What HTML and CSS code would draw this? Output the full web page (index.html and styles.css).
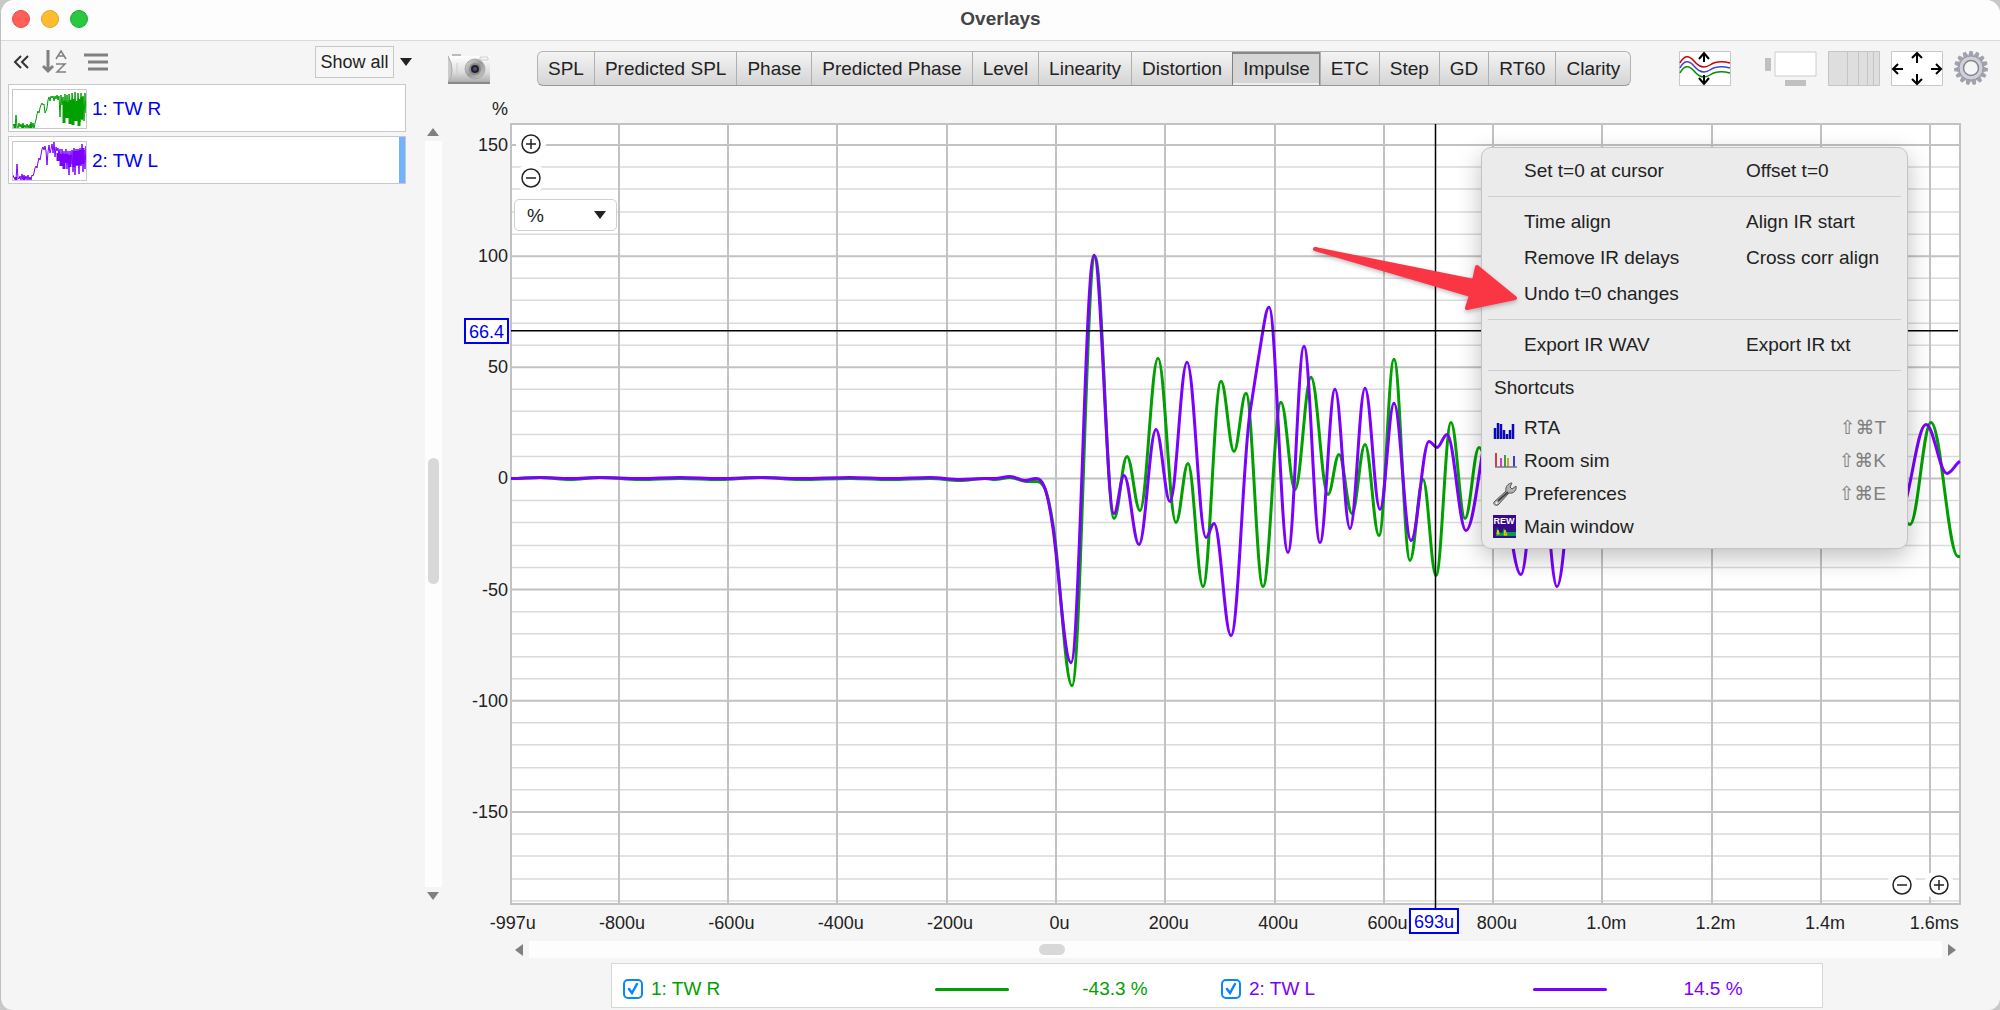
FILE: index.html
```html
<!DOCTYPE html>
<html lang="en">
<head>
  <meta charset="UTF-8">
  <meta name="viewport" content="width=device-width, initial-scale=1.0">
  <title>Overlays</title>
  <link rel="stylesheet" href="styles.css">
</head>
<body>
  <div class="window">
    <header class="titlebar">
      <div class="lights">
        <button class="light red" aria-label="Close"></button>
        <button class="light yellow" aria-label="Minimize"></button>
        <button class="light green" aria-label="Zoom"></button>
      </div>
      <h1>Overlays</h1>
    </header>

    <div class="main">
      <aside class="sidebar">
        <div class="sidebar-tools">
          <button class="icon-btn" aria-label="Collapse">
            <svg width="18" height="18" viewBox="0 0 18 18" fill="none" stroke="#333" stroke-width="2">
              <path d="M8 3L2 9l6 6M15 3L9 9l6 6"/>
            </svg>
          </button>
          <button class="icon-btn sort-btn" aria-label="Sort">
            <svg width="26" height="26" viewBox="0 0 26 26" fill="none" stroke="#808080">
              <path d="M6 1v21M1 17l5 5 5-5" stroke-width="3"/>
              <path d="M14 10l5-8 5 8M16 7h6M14 15h9l-8 8h9" stroke-width="1.5"/>
            </svg>
          </button>
          <button class="icon-btn lines-btn" aria-label="Options">
            <svg width="26" height="20" viewBox="0 0 26 20" stroke="#808080" stroke-width="3">
              <path d="M1 3h24M5 10h20M5 17h20"/>
            </svg>
          </button>
          <label class="show-filter">
            <select aria-label="Show">
              <option>Show all</option>
            </select>
            <svg width="12" height="8" viewBox="0 0 12 8"><path d="M0 0h12L6 8z" fill="#222"/></svg>
          </label>
        </div>
        <ul class="measurements">
          <li>
            <svg class="thumb" viewBox="0 0 73 38" fill="none" stroke="#00a000">
              <path d="M0 36l1-2 1 4 1-13 1 11 1 2 1-5 1 4 1-3 1 4 1-5 1 4 1-2 1 3 1-4 1 4 1-3 1 4 1-7 1 5 1-4 1 6 1-6 1-3 1-6 1-3 1 2 1-5 1-3 1-2 1 2 1-1 1 9 1-2 1-3 1-8 1-3 1 4 1-5 1 2 1-2 1 5 1-5 1 3 1-4 1 5 1-4 1 21 1-22 1 10 1-8 1 17 1-20 1 18 1-17 1 23 1-24 1 8 1 17 1-26 1 8 1 16 1-25 1 20 1 3 1-22 1 12 1 17 1-29 1 27 1-24 1 25 1-28 1 20 1-18 1 17 1-19 1 16 1-21 1 19 1-23 1 17 1-21 1 31"/>
              <path d="M2 34v4M10 35v3M18 34v4M51 11v22M54 12v16M57 10v24M60 9v26M63 11v20M66 9v27M69 7v22" stroke-width="3"/>
            </svg>
            1: TW R
          </li>
          <li class="selected">
            <svg class="thumb" viewBox="0 0 73 38" fill="none" stroke="#7a00ff">
              <path d="M0 33l1 3 1 1 1 1 1-16 1 14 1 1 1-3 1 4 1-6 1 5 1-4 1 4 1-3 1 4 1-5 1 5 1-3 1 3 1-5 1 1 1-3 1-5 1-2 1 2 1-6 1-4 1 2 1-5 1-6 1-2 1 3 1-4 1 5 1 14 1-13 1-7 1 8 1-4 1-5 1 9 1-11 1 15 1-10 1 4 1-3 1 8 1-7 1 17 1-17 1 11 1-9 1 12 1-14 1 20 1-18 1 24 1-24 1 13 1-14 1 22 1-24 1 27 1-26 1 17 1-17 1 25 1-26 1 18 1-22 1 28 1-22 1 19 1-23 1 28 1-34 1 36"/>
              <path d="M3 35v3M11 35v3M45 11v8M48 12v12M51 12v15M54 12v9M57 13v12M61 9v16M64 9v14M67 8v15M70 6v16" stroke-width="3"/>
            </svg>
            2: TW L
          </li>
        </ul>
      </aside>

      <div class="vscroll">
        <svg width="12" height="8" viewBox="0 0 12 8"><path d="M6 0l6 8H0z" fill="#808080"/></svg>
        <div class="vtrack"><div class="vthumb"></div></div>
        <svg width="12" height="8" viewBox="0 0 12 8"><path d="M0 0h12L6 8z" fill="#808080"/></svg>
      </div>

      <section class="graph">
        <div class="toolbar">
          <button class="icon-btn" aria-label="Capture">
            <svg width="43" height="34" viewBox="0 0 43 34">
              <defs>
                <linearGradient id="body" x1="0" y1="0" x2="0" y2="1">
                  <stop offset="0" stop-color="#fff"/><stop offset=".6" stop-color="#ddd"/><stop offset="1" stop-color="#aaa"/>
                </linearGradient>
                <linearGradient id="ring" x1="0" y1="0" x2="1" y2="1">
                  <stop offset="0" stop-color="#ddd"/><stop offset=".5" stop-color="#999"/><stop offset="1" stop-color="#ccc"/>
                </linearGradient>
              </defs>
              <path d="M4 3h9v2H4z" fill="#bbb"/>
              <path d="M0 5h42v27H0q6-13 0-27z" fill="url(#body)"/>
              <path d="M0 5q8 14 0 27" fill="#ccc" stroke="#aaa"/>
              <path d="M0 32h42" stroke="#888" stroke-width="2"/>
              <path d="M9 12v13" stroke="#ccc"/>
              <path d="M32 6h8v3h-8z" fill="#f5f5f5" stroke="#ccc"/>
              <circle cx="27" cy="18" r="10" fill="url(#ring)" stroke="#aaa"/>
              <circle cx="27" cy="18" r="6" fill="#888"/>
              <circle cx="27" cy="18" r="4" fill="#222"/>
              <circle cx="27" cy="18" r="2" fill="#4a4a90"/>
            </svg>
          </button>
          <nav class="tabs">
            <button>SPL</button>
            <button>Predicted SPL</button>
            <button>Phase</button>
            <button>Predicted Phase</button>
            <button>Level</button>
            <button>Linearity</button>
            <button>Distortion</button>
            <button class="active">Impulse</button>
            <button>ETC</button>
            <button>Step</button>
            <button>GD</button>
            <button>RT60</button>
            <button>Clarity</button>
          </nav>
          <div class="view-tools">
            <button class="icon-btn traces-btn" aria-label="Separate traces">
              <svg width="52" height="35" viewBox="0 0 52 35" fill="none">
                <path d="M.5.5h51v34H.5z" fill="#fff" stroke="#c8c8c8"/>
                <path d="M1 12C5 4 10 4 15 10s10 8 16 4 12-4 20-2" stroke="#d00000" stroke-width="1.5"/>
                <path d="M1 17C5 9 10 9 15 15s10 8 16 4 12-4 20-2" stroke="#4040e0" stroke-width="1.5"/>
                <path d="M1 22C5 14 10 14 15 20s10 8 16 4 12-4 20-2" stroke="#009000" stroke-width="1.5"/>
                <path d="M25 11V2M20 8l5-6 5 6M25 24v9M20 27l5 6 5-6" stroke="#000" stroke-width="2"/>
              </svg>
            </button>
            <button class="icon-btn" aria-label="Scrollbars">
              <svg width="52" height="35" viewBox="0 0 52 35">
                <path d="M10 1h41v24H10z" fill="#fff" stroke="#ccc"/>
                <path d="M0 7h6v13H0zM20 29h21v6H20z" fill="#c0c0c0"/>
              </svg>
            </button>
            <button class="icon-btn" aria-label="Frequency axis">
              <svg width="52" height="35" viewBox="0 0 52 35" stroke="#c4c4c4">
                <path d="M.5.5h51v34H.5z" fill="#dedede"/>
                <path d="M19.500 1v33M30.500 1v33M39.500 1v33M45.500 1v33"/>
              </svg>
            </button>
            <button class="icon-btn" aria-label="Graph limits">
              <svg width="52" height="35" viewBox="0 0 52 35" fill="none">
                <path d="M.5.5h51v34H.5z" fill="#fff" stroke="#c8c8c8"/>
                <path d="M26 12V2M21 7l5-5 5 5M26 23v10M21 28l5 5 5-5M12 18H2M7 13l-5 5 5 5M40 18h10M45 13l5 5-5 5" stroke="#000" stroke-width="2"/>
              </svg>
            </button>
            <button class="icon-btn" aria-label="Graph controls">
              <svg width="34" height="35" viewBox="-17 -17 34 35">
                <g id="gear-teeth" fill="#a2a2ae"></g>
                <circle r="12" fill="#d0d0da" stroke="#9a9aa6"/>
                <circle r="7.500" fill="#f5f5f5" stroke="#85858f" stroke-width="1.500"/>
              </svg>
            </button>
          </div>
        </div>
        <div class="unit">%</div>

        <div class="plot-row">
          <div class="y-axis">
            <span>150</span><span>100</span><span>50</span><span>0</span><span>-50</span><span>-100</span><span>-150</span>
          </div>
          <div class="plot">
            <svg class="traces" viewBox="511 124 1449 779" preserveAspectRatio="none" fill="none">
              <g id="minor" stroke="#dadada" stroke-width="1.500"></g>
              <g id="major" stroke="#c2c2c2" stroke-width="2"></g>
              <path id="trace-r" stroke="#00a000" stroke-width="3"/>
              <path id="trace-l" stroke="#7a00ff" stroke-width="3"/>
              <path d="M511 330.500H1958M1435.500 124V908" stroke="#000" stroke-width="1.500"/>
            </svg>

            <div class="zoom-y">
              <button class="zoom-btn" aria-label="Zoom in vertically"><svg width="20" height="20" viewBox="0 0 20 20"><path d="M10 5v10M5 10h10"/><circle cx="10" cy="10" r="9"/></svg></button>
              <button class="zoom-btn" aria-label="Zoom out vertically"><svg width="20" height="20" viewBox="0 0 20 20"><path d="M5 10h10"/><circle cx="10" cy="10" r="9"/></svg></button>
            </div>
            <select class="unit-select" aria-label="Y axis unit">
              <option>%</option>
            </select>
            <div class="zoom-x">
              <button class="zoom-btn" aria-label="Zoom out horizontally"><svg width="20" height="20" viewBox="0 0 20 20"><path d="M5 10h10"/><circle cx="10" cy="10" r="9"/></svg></button>
              <button class="zoom-btn" aria-label="Zoom in horizontally"><svg width="20" height="20" viewBox="0 0 20 20"><path d="M10 5v10M5 10h10"/><circle cx="10" cy="10" r="9"/></svg></button>
            </div>

            <span class="cursor-label cursor-y">66.4</span>
            <span class="cursor-label cursor-x">693u</span>

            <div class="menu">
              <div class="menu-pair"><button>Set t=0 at cursor</button><button>Offset t=0</button></div>
              <hr>
              <div class="menu-pair"><button>Time align</button><button>Align IR start</button></div>
              <div class="menu-pair"><button>Remove IR delays</button><button>Cross corr align</button></div>
              <div class="menu-pair"><button>Undo t=0 changes</button></div>
              <hr>
              <div class="menu-pair"><button>Export IR WAV</button><button>Export IR txt</button></div>
              <hr>
              <h2>Shortcuts</h2>
              <button class="shortcut">
                <svg width="24" height="24" viewBox="0 0 24 24" stroke="#0a0ab4" stroke-width="2.500"><path d="M2 23V12M5 23V7M8 23V8M11 23v-9M14 23v-5M17 23v-9M20 23V8"/></svg>
                RTA <kbd>⇧⌘T</kbd>
              </button>
              <button class="shortcut">
                <svg width="24" height="24" viewBox="0 0 24 24" stroke-width="1.500"><path d="M3 18V4" stroke="#d00000"/><path d="M8 18V9" stroke="#d000d0"/><path d="M12 18V6" stroke="#008800"/><path d="M15 18V9" stroke="#c09000"/><path d="M21 18V7" stroke="#0000d0"/><path d="M2 18h22" stroke="#777"/></svg>
                Room sim <kbd>⇧⌘K</kbd>
              </button>
              <button class="shortcut">
                <svg width="24" height="24" viewBox="0 0 24 24"><path d="M1 20L13 9C12 5 15 1 19 1l-2 4 2 2 4-3c1 5-3 8-7 7L5 23c-3 1-5-1-4-3z" fill="#b0b0b0" stroke="#555"/><path d="M5 19l10-9" stroke="#444" stroke-width="2"/><circle cx="3.500" cy="21" r="1" fill="#fff"/></svg>
                Preferences <kbd>⇧⌘E</kbd>
              </button>
              <button class="shortcut">
                <svg width="24" height="24" viewBox="0 0 24 24"><path d="M0 0h23v23H0z" fill="#3a0a8c"/><path d="M3 20l1-8 2 5 3 1 2-5 2 4 10 0v4H3z" fill="#00a040"/><path d="M4 19l1-4 1 4zM11 20l1-5 2 5z" fill="#ff5020" stroke="#e0e000"/><text class="rew" x="11" y="9" text-anchor="middle">REW</text></svg>
                Main window
              </button>
            </div>

            <svg class="pointer" width="210" height="70" viewBox="1310 244 210 70">
              <path d="M1315 249L1474 281l3-14 38 31-48 10 4-13z" fill="#fa3544" stroke="#fa3544" stroke-width="4" stroke-linejoin="round"/>
            </svg>
          </div>
        </div>

        <div class="x-axis">
          <span>-997u</span><span>-800u</span><span>-600u</span><span>-400u</span><span>-200u</span><span>0u</span><span>200u</span><span>400u</span><span>600u</span><span>800u</span><span>1.0m</span><span>1.2m</span><span>1.4m</span><span>1.6ms</span>
        </div>

        <div class="hscroll">
          <svg width="8" height="12" viewBox="0 0 8 12"><path d="M8 0v12L0 6z" fill="#808080"/></svg>
          <div class="htrack"><div class="hthumb"></div></div>
          <svg width="8" height="12" viewBox="0 0 8 12"><path d="M0 0v12l8-6z" fill="#808080"/></svg>
        </div>

        <div class="legend">
          <div class="legend-item trace-right">
            <input type="checkbox" id="show-r" checked>
            <label for="show-r">1: TW R</label>
            <i></i>
            <output>-43.3 %</output>
          </div>
          <div class="legend-item trace-left">
            <input type="checkbox" id="show-l" checked>
            <label for="show-l">2: TW L</label>
            <i></i>
            <output>14.5 %</output>
          </div>
        </div>
      </section>
    </div>
  </div>

  <script src="script.js"></script>
</body>
</html>
```
FILE: styles.css
```css
:root {
  --bg: #f5f5f5;
  --border: #c8c8c8;
  --text: #222;
  --blue: #0000f0;
  --trace-r: #00a000;
  --trace-l: #7a00ff;
  --track: #fdfdfd;
  --thumb: #d8d8d8;
}

* {
  margin: 0;
  padding: 0;
  box-sizing: border-box;
  font-family: "Liberation Sans", Arial, Helvetica, sans-serif;
}

body {
  color: var(--text);
  background-color: #c8c8c8;
  font-size: 18px;
  line-height: 20px;
  overflow: hidden;
}

button {
  border: none;
  background: none;
  color: inherit;
  font-size: 19px;
  line-height: 20px;
}

svg {
  display: block;
}

.window {
  display: flex;
  flex-direction: column;
  height: 100vh;
  background-color: var(--bg);
  border-left: 1px solid #c0c0c0;
  border-radius: 14px 14px 12px 12px;
  overflow: hidden;
}

.titlebar {
  display: grid;
  grid-template-columns: 1fr auto 1fr;
  align-items: center;
  height: 41px;
  padding: 0 11px 2px;
  background-color: #fdfdfd;
  border-bottom: 1px solid #dadada;
}

.titlebar h1 {
  font-size: 19px;
  font-weight: bold;
  color: #444;
}

.lights {
  display: flex;
  gap: 11px;
}

.light {
  width: 18px;
  height: 18px;
  border-radius: 50%;
}

.red {
  background-color: #ff5f57;
  border: 1px solid #e24b41;
}

.yellow {
  background-color: #febc2e;
  border: 1px solid #e1a325;
}

.green {
  background-color: #28c840;
  border: 1px solid #1dac2c;
}

.main {
  display: flex;
  flex: 1;
  min-height: 0;
}

/* Measurement list */
.sidebar {
  width: 412px;
  padding-left: 7px;
}

.sidebar-tools {
  display: flex;
  align-items: center;
  height: 43px;
  padding: 0 0 2px 5px;
}

.sort-btn {
  margin-left: 11px;
}

.lines-btn {
  margin-left: 15px;
}

.show-filter {
  display: flex;
  align-items: center;
  gap: 6px;
  margin-left: auto;
  padding-right: 1px;
}

.show-filter select {
  appearance: none;
  width: 79px;
  height: 32px;
  border: 1px solid var(--border);
  background-color: #f7f7f7;
  color: var(--text);
  font-size: 18px;
  text-align: center;
}

.measurements {
  display: flex;
  flex-direction: column;
  gap: 4px;
  width: 398px;
  list-style: none;
}

.measurements li {
  display: flex;
  align-items: center;
  gap: 5px;
  height: 48px;
  padding: 1px 0 0 3px;
  border: 1px solid var(--border);
  background-color: #fff;
  color: var(--blue);
  font-size: 19px;
}

.measurements .selected {
  box-shadow: inset -6px 0 #70b4ff;
}

.thumb {
  width: 75px;
  height: 40px;
  border: 1px solid var(--border);
}

/* Scrollbars */
.vscroll {
  display: flex;
  flex-direction: column;
  align-items: center;
  gap: 5px;
  width: 40px;
  padding: 87px 0 110px;
}

.vtrack {
  flex: 1;
  width: 17px;
  padding: 3px;
  background-color: var(--track);
}

.vthumb {
  height: 17%;
  margin-top: 314px;
  border-radius: 6px;
  background-color: var(--thumb);
}

.hscroll {
  display: flex;
  align-items: center;
  gap: 6px;
  height: 17px;
  margin: 8px 44px 0 71px;
}

.htrack {
  flex: 1;
  height: 17px;
  padding: 3px;
  background-color: var(--track);
}

.hthumb {
  width: 26px;
  height: 11px;
  margin-left: 36%;
  border-radius: 6px;
  background-color: var(--thumb);
}

/* Graph area */
.graph {
  display: flex;
  flex-direction: column;
  flex: 1;
  min-width: 0;
  margin-left: -9px;
  padding-bottom: 2px;
}

.toolbar {
  display: flex;
  align-items: flex-start;
  height: 58px;
  padding: 10px 12px 0 4px;
}

.tabs {
  display: flex;
  height: 35px;
  margin-left: 46px;
  border: 1px solid #b4b4b4;
  border-bottom-color: #989898;
  border-radius: 6px;
  background-image: linear-gradient(#f4f4f4, #d4d4d4);
}

.tabs button {
  padding: 0 10px;
  white-space: nowrap;
}

.tabs button + button {
  border-left: 1px solid #b0b0b0;
}

.tabs .active {
  background-color: #d6d6d6;
  border-left-color: #808080;
  box-shadow: inset 0 2px #888, inset -1px 0 #888, inset 0 -2px #eee;
}

.view-tools {
  display: flex;
  gap: 11px;
  margin-left: auto;
}

.traces-btn {
  margin-right: 23px;
}

.unit {
  width: 64px;
  height: 25px;
  text-align: right;
}

.plot-row {
  display: grid;
  grid-template-columns: 67px 1fr;
  flex: 1;
  min-height: 0;
  margin-right: 40px;
}

.y-axis {
  display: flex;
  flex-direction: column;
  justify-content: space-between;
  padding: 11px 3px 82px 0;
  text-align: right;
}

.plot {
  position: relative;
  background-color: #fff;
  min-height: 0;
}

.traces {
  position: absolute;
  width: 100%;
  height: 100%;
  overflow: visible;
}

.traces path {
  vector-effect: non-scaling-stroke;
}

.zoom-y {
  position: absolute;
  top: 10px;
  left: 3px;
  display: flex;
  flex-direction: column;
  gap: 14px;
  width: 34px;
  align-items: center;
}

.zoom-x {
  position: absolute;
  right: 11px;
  bottom: 9px;
  display: flex;
  gap: 17px;
}

.zoom-btn {
  width: 20px;
  height: 20px;
  border-radius: 50%;
  background-color: #fff;
  box-shadow: 0 0 0 5px #fff;
}

.zoom-btn svg {
  fill: none;
  stroke: #222;
  stroke-width: 1.5;
}

.unit-select {
  position: absolute;
  top: 75px;
  left: 3px;
  appearance: none;
  width: 103px;
  height: 32px;
  padding-left: 12px;
  border: 1px solid #d0d0d0;
  border-radius: 5px;
  color: var(--text);
  font-size: 19px;
  background: #fff url("data:image/svg+xml,%3csvg xmlns='http://www.w3.org/2000/svg' viewBox='0 0 12 8'%3e%3cpath d='M0 0h12L6 8z' fill='%23222'/%3e%3c/svg%3e") no-repeat right 10px center / 12px 8px;
}

.cursor-label {
  position: absolute;
  padding: 2px 3px 0;
  border: 2px solid var(--blue);
  background-color: #fff;
  color: var(--blue);
}

.cursor-y {
  top: 26.5%;
  right: 100%;
  margin-right: 2px;
  transform: translateY(-50%);
}

.cursor-x {
  top: 100%;
  left: 63.7%;
  margin-top: 4px;
  transform: translateX(-50%);
}

.x-axis {
  display: grid;
  grid-template-columns: repeat(14, 1fr);
  margin: 9px 11px 0 14px;
  text-align: center;
}

/* Context menu */
.menu {
  position: absolute;
  top: 23px;
  right: 52px;
  width: 427px;
  padding: 5px;
  border: 1px solid #c4c4c4;
  border-radius: 10px;
  background-color: #ebebeb;
  box-shadow: 0 8px 24px rgba(0, 0, 0, 0.25);
}

.menu-pair {
  display: grid;
  grid-template-columns: 222px 1fr;
  height: 36px;
  padding-left: 37px;
}

.menu button {
  text-align: left;
}

.menu hr {
  height: 1px;
  margin: 7px 1px;
  border: none;
  background-color: #cecece;
}

.menu h2 {
  margin: 0 0 13px 7px;
  font-size: 19px;
  line-height: 20px;
  font-weight: normal;
}

.shortcut {
  display: flex;
  align-items: center;
  gap: 7px;
  width: 100%;
  height: 33px;
  padding: 0 16px 0 6px;
}

.shortcut kbd {
  margin-left: auto;
  color: #808080;
  font-family: "Liberation Sans", "DejaVu Sans", sans-serif;
  font-size: 19px;
}

.rew {
  fill: #fff;
  font-size: 9px;
  font-weight: bold;
}

.pointer {
  position: absolute;
  top: 120px;
  right: 440px;
  filter: drop-shadow(0 2px 2px rgba(0, 0, 0, 0.25));
}

/* Legend */
.legend {
  display: grid;
  grid-template-columns: 1fr 1fr;
  height: 45px;
  margin: 5px 177px 0 167px;
  padding: 7px 3px 0 11px;
  border: 1px solid #d8d8d8;
  background-color: #fff;
  font-size: 19px;
}

.legend-item {
  display: grid;
  grid-template-columns: 28px 284px 74px 1fr;
  align-items: center;
}

.legend-item i {
  height: 3px;
  border-radius: 2px;
  background-color: currentColor;
}

.legend-item output {
  text-align: center;
}

.legend-item input {
  appearance: none;
  width: 20px;
  height: 20px;
  border: 2px solid #0a84ff;
  border-radius: 5px;
  background: #fff url("data:image/svg+xml,%3csvg xmlns='http://www.w3.org/2000/svg' viewBox='0 0 16 16'%3e%3cpath d='M4 8l3 4 5-9' fill='none' stroke='%230a84ff' stroke-width='2.500' stroke-linecap='round'/%3e%3c/svg%3e") center / 16px 16px;
}

.trace-right {
  color: var(--trace-r);
}

.trace-left {
  color: var(--trace-l);
}
```
FILE: script.js
```js
// Turning points of each trace: [x, y] or [x, y, slope]
const traceR = [
  [511, 478], [540, 477], [570, 479], [600, 477], [640, 479], [680, 478], [720, 479], [760, 477],
  [800, 479], [850, 478], [890, 479], [930, 478], [960, 480], [985, 478], [995, 479], [1010, 477],
  [1026, 481], [1036, 481], [1054, 531, 7], [1072, 685], [1095, 256], [1114, 518], [1127, 456],
  [1140, 510], [1158, 358], [1176, 522], [1188, 463], [1203, 586], [1221, 381], [1234, 451],
  [1246, 393], [1263, 586], [1281, 402], [1295, 489], [1311, 377], [1328, 494], [1339, 454],
  [1352, 513], [1365, 444], [1379, 535], [1394, 359], [1410, 560], [1423, 479], [1436, 575],
  [1451, 422], [1465, 518], [1479, 447], [1500, 520], [1600, 440], [1700, 520], [1800, 450],
  [1870, 440], [1910, 524], [1931, 422], [1958, 556], [1960, 556]
];

const traceL = [
  [511, 478], [540, 477], [570, 478], [600, 477], [640, 478], [680, 477], [720, 478], [760, 477],
  [800, 478], [850, 477], [890, 478], [930, 477], [960, 479], [985, 478], [995, 478], [1010, 476],
  [1025, 480], [1036, 478], [1053, 528, 7], [1071, 662], [1094, 255], [1114, 513], [1124, 475],
  [1139, 544], [1156, 429], [1170, 501], [1187, 362], [1206, 537], [1214, 523], [1231, 635],
  [1250, 412, -6.5], [1262, 336, -6], [1269, 307], [1288, 552], [1304, 346], [1320, 542],
  [1335, 389], [1350, 528], [1365, 388], [1380, 509], [1394, 403], [1411, 540], [1429, 441],
  [1437, 447], [1447, 434], [1466, 530], [1492, 420], [1521, 574], [1539, 440], [1557, 586],
  [1578, 430], [1700, 520], [1800, 440], [1900, 510], [1926, 424], [1947, 473], [1960, 461, -0.5]
];

function tracePath(points) {
  let d = `M${points[0][0]} ${points[0][1]}`;
  for (let i = 1; i < points.length; i++) {
    const [x0, y0, s0 = 0] = points[i - 1];
    const [x1, y1, s1 = 0] = points[i];
    const h = (x1 - x0) * 0.37;
    d += `C${x0 + h} ${y0 + h * s0} ${x1 - h} ${y1 - h * s1} ${x1} ${y1}`;
  }
  return d;
}

document.getElementById('trace-r').setAttribute('d', tracePath(traceR));
document.getElementById('trace-l').setAttribute('d', tracePath(traceL));

// Grid: a line every 10%, heavier every 50%
let minor = '';
let major = '';
for (let v = -190; v <= 150; v += 10) {
  const line = `M511 ${Math.round(478 - v * 2.22)}H1960`;
  if (v % 50 === 0) major += line;
  else minor += line;
}
for (let t = -800; t <= 1600; t += 200) {
  major += `M${Math.round(1056 + t * 0.5463)} 124V903`;
}
major += 'M511 124H1960V903H511z';
document.getElementById('minor').innerHTML = `<path d="${minor}"/>`;
document.getElementById('major').innerHTML = `<path d="${major}"/>`;

let teeth = '';
for (let a = 0; a < 360; a += 24) {
  teeth += `<path d="M-3 -11L-1.5 -17h3L3 -11z" transform="rotate(${a})"/>`;
}
document.getElementById('gear-teeth').innerHTML = teeth;
```
